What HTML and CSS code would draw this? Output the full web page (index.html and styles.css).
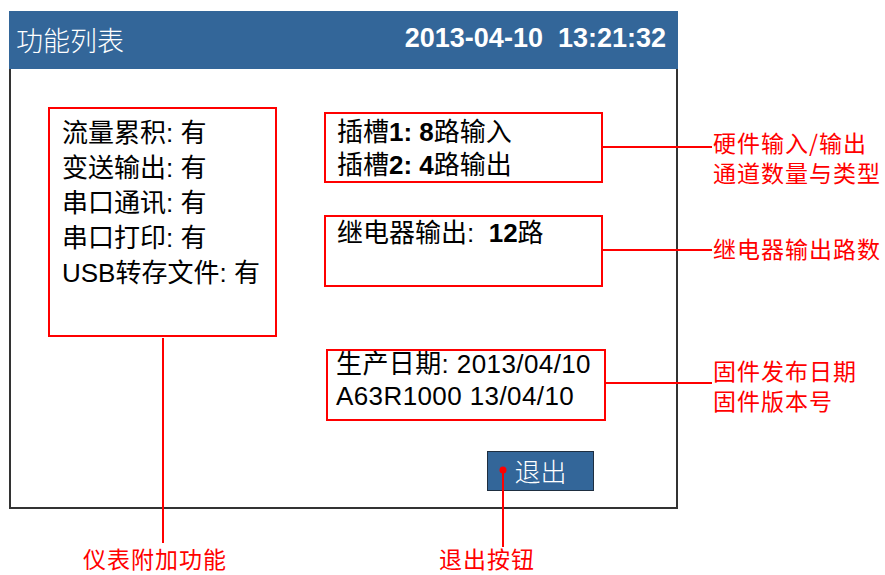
FILE: index.html
```html
<!DOCTYPE html>
<html lang="zh-CN">
<head>
    <meta charset="UTF-8">
    <meta name="viewport" content="width=device-width, initial-scale=1.0">
    <title>功能列表</title>
    <link rel="stylesheet" href="styles.css">
</head>
<body>
    <div id="page">
        <div id="screen">
            <div class="titlebar">
                <span class="title">功能列表</span>
                <span class="clock">2013-04-10&nbsp; 13:21:32</span>
            </div>
            <div class="content">
                <div class="box features">
                    <div>流量累积: 有</div>
                    <div>变送输出: 有</div>
                    <div>串口通讯: 有</div>
                    <div>串口打印: 有</div>
                    <div>USB转存文件: 有</div>
                </div>
                <div class="right-col">
                    <div class="box slots">
                        <div>插槽<b>1: 8</b>路输入</div>
                        <div>插槽<b>2: 4</b>路输出</div>
                    </div>
                    <div class="box relay">继电器输出:&nbsp; <b>12</b>路</div>
                    <div class="box firmware">
                        <div>生产日期: 2013/04/10</div>
                        <div>A63R1000 13/04/10</div>
                    </div>
                    <button class="exit">退出</button>
                </div>
            </div>
        </div>

        <!-- callout lines -->
        <svg class="callouts" width="885" height="575" viewBox="0 0 885 575">
            <g stroke="#ff0000" stroke-width="2" fill="none">
                <line x1="163" y1="338" x2="163" y2="543" />
                <line x1="503" y1="470" x2="503" y2="547" />
                <line x1="603" y1="147" x2="712" y2="147" />
                <line x1="603" y1="250" x2="712" y2="250" />
                <line x1="606" y1="383" x2="712" y2="383" />
            </g>
            <circle cx="503" cy="470" r="3.5" fill="#ff0000" />
        </svg>

        <div class="note note-extra">仪表附加功能</div>
        <div class="note note-exit">退出按钮</div>
        <div class="note note-io">
            <div>硬件输入/输出</div>
            <div>通道数量与类型</div>
        </div>
        <div class="note note-relay">继电器输出路数</div>
        <div class="note note-fw">
            <div>固件发布日期</div>
            <div>固件版本号</div>
        </div>
    </div>
</body>
</html>
```

FILE: styles.css
```css
body {
    margin: 0;
    padding: 0;
    background: #fff;
    font-family: "Liberation Sans", "Noto Sans CJK SC", sans-serif;
    color: #000;
}
#page {
    position: relative;
    width: 885px;
    height: 575px;
    padding: 11px 0 0 9px;
    box-sizing: border-box;
    overflow: hidden;
}
#screen {
    width: 669px;
    height: 498px;
    display: flex;
    flex-direction: column;
}
.titlebar {
    height: 58px;
    background: #336699;
    color: #fff;
    display: flex;
    justify-content: space-between;
    align-items: center;
    padding: 0 12px 0 7px;
}
.title {
    font-family: "Noto Sans CJK SC", sans-serif;
    font-size: 27px;
    font-weight: 300;
    margin-top: -2px;
}
.clock {
    font-size: 27px;
    font-weight: bold;
    margin-top: -3px;
}
.content {
    flex: 1;
    display: flex;
    align-items: flex-start;
    border: 2px solid #333;
    border-top: none;
}
.box {
    border: 2px solid #ff0000;
    box-sizing: border-box;
    font-size: 26px;
}
.box b {
    font-weight: bold;
}
.features {
    margin: 38px 0 0 37px;
    width: 229px;
    height: 230px;
    padding: 7px 0 0 12px;
    line-height: 35px;
}
.right-col {
    margin: 43px 0 0 47px;
    display: flex;
    flex-direction: column;
    align-items: flex-start;
}
.slots {
    width: 279px;
    height: 71px;
    padding: 2px 0 0 11px;
    line-height: 33px;
}
.relay {
    margin-top: 32px;
    width: 279px;
    height: 72px;
    padding: 0 0 0 11px;
    line-height: 33px;
}
.firmware {
    margin: 62px 0 0 2px;
    width: 280px;
    height: 72px;
    padding: 0 0 0 8px;
    line-height: 32px;
    letter-spacing: 0.4px;
}
.firmware div:first-child {
    margin-top: -3px;
}
.exit {
    margin: 30px 0 0 163px;
    width: 107px;
    height: 40px;
    padding: 0;
    background: #336699;
    border: 1px solid #1e2e40;
    color: #fff;
    font-family: "Noto Sans CJK SC", sans-serif;
    font-size: 26px;
    font-weight: 300;
    line-height: 36px;
}
.callouts {
    position: absolute;
    left: 0;
    top: 0;
    pointer-events: none;
}
.note {
    position: absolute;
    color: #ff0000;
    font-family: "Noto Sans CJK SC", sans-serif;
    font-size: 23px;
    line-height: 30px;
    letter-spacing: 1px;
    white-space: nowrap;
}
.note-extra {
    left: 83px;
    top: 545px;
    line-height: 26px;
}
.note-exit {
    left: 439px;
    top: 545px;
    line-height: 26px;
}
.note-io {
    left: 713px;
    top: 127px;
}
.note-relay {
    left: 713px;
    top: 233px;
}
.note-fw {
    left: 713px;
    top: 355px;
}
```
